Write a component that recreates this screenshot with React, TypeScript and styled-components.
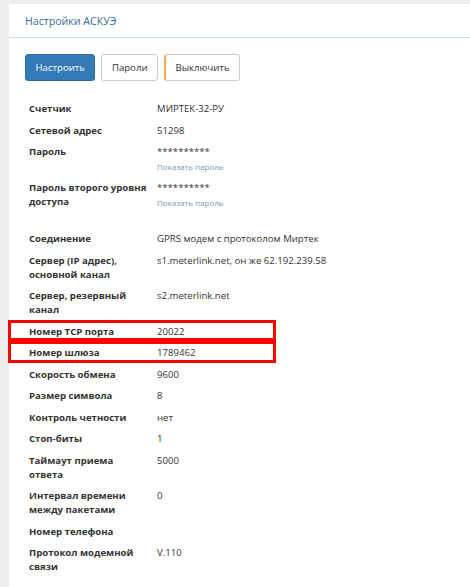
import { createGlobalStyle, styled } from "styled-components";

const GlobalStyle = createGlobalStyle`
  html, body {
    margin: 0;
    padding: 0;
    background: #eeeeee;
    font-family: "Open Sans", "Liberation Sans", sans-serif;
    color: #333;
  }
`;

const Page = styled.div`
  padding: 4px 0 0 9px;
  min-height: 583px;
`;

const Panel = styled.div`
  background: #fff;
  min-height: 583px;
`;

const PanelHeading = styled.div`
  height: 33px;
  padding: 0 16px;
  display: flex;
  align-items: center;
  border-bottom: 1px solid #bce8f1;
  color: #31708f;
  font-size: 10.6px;
`;

const PanelBody = styled.div`
  padding: 16px 16px 0 16px;
`;

const Toolbar = styled.div`
  display: flex;
  gap: 6px;
  margin-bottom: 17px;
`;

const Button = styled.button<{ $variant?: "primary" | "warning" }>`
  height: 27px;
  padding: 0 9.5px;
  font-family: inherit;
  font-size: 9.6px;
  border-radius: 3px;
  border: 1px solid ${(p) => (p.$variant === "primary" ? "#2e6da4" : "#ccc")};
  border-left: ${(p) =>
    p.$variant === "warning" ? "2px solid #f0ad4e" : undefined};
  background: ${(p) => (p.$variant === "primary" ? "#337ab7" : "#fff")};
  color: ${(p) => (p.$variant === "primary" ? "#fff" : "#333")};
  cursor: pointer;
`;

const Table = styled.div`
  display: flex;
  flex-direction: column;
  padding-left: 4px;
`;

const Row = styled.div<{ $highlight?: boolean; $gap?: boolean }>`
  position: relative;
  display: grid;
  grid-template-columns: 128px 1fr;
  padding: 4px 0 3.5px;
  margin-bottom: ${(p) => (p.$gap ? "16px" : "0")};
  font-size: 9.6px;
  line-height: 14px;

  &::after {
    content: "";
    display: ${(p) => (p.$highlight ? "block" : "none")};
    position: absolute;
    top: -1px;
    bottom: 1px;
    left: -21px;
    width: 268px;
    border: 3px solid #f00;
    box-sizing: border-box;
  }
`;

const Label = styled.div`
  font-weight: 700;
  padding-right: 8px;
`;

const Value = styled.div`
  display: flex;
  flex-direction: column;
`;

const ShowLink = styled.a`
  margin-top: 2px;
  font-size: 8px;
  line-height: 12px;
  color: #6c9bc4;
  text-decoration: none;
`;

type Item = {
  label: string;
  value?: string;
  secret?: boolean;
  highlight?: boolean;
  gap?: boolean;
};

const items: Item[] = [
  { label: "Счетчик", value: "МИРТЕК-32-РУ" },
  { label: "Сетевой адрес", value: "51298" },
  { label: "Пароль", value: "**********", secret: true },
  { label: "Пароль второго уровня доступа", value: "**********", secret: true, gap: true },
  { label: "Соединение", value: "GPRS модем с протоколом Миртек" },
  { label: "Сервер (IP адрес), основной канал", value: "s1.meterlink.net, он же 62.192.239.58" },
  { label: "Сервер, резервный канал", value: "s2.meterlink.net" },
  { label: "Номер TCP порта", value: "20022", highlight: true },
  { label: "Номер шлюза", value: "1789462", highlight: true },
  { label: "Скорость обмена", value: "9600" },
  { label: "Размер символа", value: "8" },
  { label: "Контроль четности", value: "нет" },
  { label: "Стоп-биты", value: "1" },
  { label: "Таймаут приема ответа", value: "5000" },
  { label: "Интервал времени между пакетами", value: "0" },
  { label: "Номер телефона" },
  { label: "Протокол модемной связи", value: "V.110" },
];

export default function App() {
  return (
    <>
      <GlobalStyle />
      <Page>
        <Panel>
          <PanelHeading>Настройки АСКУЭ</PanelHeading>
          <PanelBody>
            <Toolbar>
              <Button $variant="primary">Настроить</Button>
              <Button>Пароли</Button>
              <Button $variant="warning">Выключить</Button>
            </Toolbar>
            <Table>
              {items.map((it) => (
                <Row key={it.label} $highlight={it.highlight} $gap={it.gap}>
                  <Label>{it.label}</Label>
                  <Value>
                    <span>{it.value}</span>
                    {it.secret && <ShowLink href="#">Показать пароль</ShowLink>}
                  </Value>
                </Row>
              ))}
            </Table>
          </PanelBody>
        </Panel>
      </Page>
    </>
  );
}
